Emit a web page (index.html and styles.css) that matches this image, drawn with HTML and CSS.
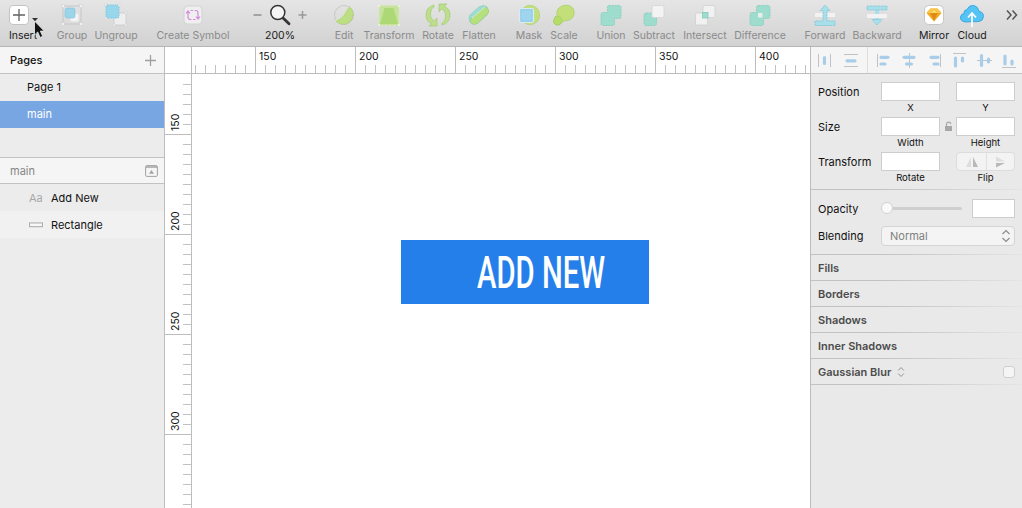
FILE: index.html
```html
<!DOCTYPE html>
<html lang="en">
<head>
<meta charset="utf-8">
<title>Sketch</title>
<link rel="stylesheet" href="styles.css">
</head>
<body>
<div class="app">
  <header class="toolbar">
    <div class="tool on insert"><svg class="icon" viewBox="0 0 24 24"><rect x="2.5" y="2.5" width="19" height="19" rx="3.5" fill="#fff" stroke="#c4c4c4"/><path d="M12 6v12M6 12h12" stroke="#606060" stroke-width="1.3"/></svg><span>Insert</span>
      <svg class="cursor" viewBox="0 0 14 24"><path d="M0 1h6l-3 3.300z" fill="#333"/><path d="M2.500 4v14l3.200-3 2.400 5.500 2.600-1.200-2.400-5.200h4z" fill="#111" stroke="#eee" stroke-width=".8"/></svg></div>
    <div class="tool group"><svg class="icon" viewBox="0 0 24 24"><rect x="3" y="3" width="18" height="18" fill="none" stroke="#c6c6c6"/><rect x="10" y="10" width="9" height="9" rx="2" fill="#f3f3f3" stroke="#ddd"/><rect x="5" y="5" width="10" height="10" rx="2" fill="#9bd5ea" stroke="#80c3e0" stroke-width=".6"/><g fill="#f2f2f2" stroke="#ccc" stroke-width=".5"><rect x="1.500" y="1.500" width="3" height="3"/><rect x="19.500" y="1.500" width="3" height="3"/><rect x="1.500" y="19.500" width="3" height="3"/><rect x="19.500" y="19.500" width="3" height="3"/></g></svg><span>Group</span></div>
    <div class="tool ungroup"><svg class="icon" viewBox="0 0 24 24"><rect x="10" y="10" width="12" height="12" rx="1" fill="#eee" stroke="#cacaca" stroke-width=".8"/><rect x="2" y="2" width="13" height="13" rx="1.500" fill="#98d6eb" stroke="#7fc5e0" stroke-dasharray="1.500 1"/><g fill="#f5f5f5" stroke="#c8c8c8" stroke-width=".4"><path d="M9 21h2v2H9zM21 21h2v2h-2zM21 9h2v2h-2zM0.500 1h2v2h-2zM14 1h2v2h-2zM0.500 14h2v2h-2z"/></g></svg><span>Ungroup</span></div>
    <div class="tool symbol"><svg class="icon" viewBox="0 0 24 24"><rect x="3" y="3" width="18" height="18" rx="3.500" fill="#efefef" stroke="#d3d3d3"/><path d="M10.500 16.500H9q-2 0-2-3V9M5 10.500l2-2.500 2 2.500M13.500 7.500H15q2 0 2 3V15M15 13.500l2 2.500 2-2.500M9.500 7.500h2.500M12 16.500h2.500" fill="none" stroke="#d58bdd" stroke-width="1.200"/></svg><span>Create Symbol</span></div>
    <div class="tool on zoom"><div class="zoomrow"><svg width="9" height="24" viewBox="0 0 9 24"><path d="M.5 12h8" stroke="#999" stroke-width="1.700"/></svg><svg class="icon" viewBox="0 0 24 24"><path d="M15 15l6 5.800" stroke="#353535" stroke-width="2.800" stroke-linecap="round"/><circle cx="9.800" cy="9.500" r="7" fill="#f5f5f5" stroke="#353535" stroke-width="1.500"/></svg><svg width="9" height="24" viewBox="0 0 9 24"><path d="M.5 12h8M4.500 8v8" stroke="#999" stroke-width="1.500"/></svg></div><span>200%</span></div>
    <div class="tool edit"><svg class="icon" viewBox="0 0 24 24"><circle cx="12" cy="12" r="9.500" fill="none" stroke="#c0c0c0" stroke-width=".8"/><path d="M17 3.500A9.800 9.800 0 1 1 4 18Q12 16 17 3.500z" fill="#bbdf82" stroke="#9fca6b" stroke-width=".8" stroke-dasharray="1.500 .8"/><path d="M4 18L17 4" stroke="#d8e8b6"/></svg><span>Edit</span></div>
    <div class="tool transform"><svg class="icon" viewBox="0 0 24 24"><rect x="2" y="2.500" width="20" height="20" fill="#c7e29c" stroke="#d9e9bd" stroke-dasharray="2 2"/><path d="M7.500 5h9l4.500 16H3z" fill="#acd876"/><path d="M1 2h2v2H1zM21 2h2v2h-2zM1 21h2v2H1zM21 21h2v2h-2z" fill="#e9f1d8"/></svg><span>Transform</span></div>
    <div class="tool rotate"><svg class="icon" viewBox="-1 0 26 24"><g fill="#bcde8d" stroke="#a4cd73" stroke-width=".7"><path id="turn" d="M8 2Q0 4 0 12q0 7 6 8.500L3 23h8v-8l-2.500 3Q4 16 4.500 10 5 5 8 4z"/><path d="M16 22q8-2 8-10 0-7-6-8.500L21 1h-8v8l2.500-3Q20 8 19.500 14 19 19 16 20z"/></g></svg><span>Rotate</span></div>
    <div class="tool flatten"><svg class="icon" viewBox="0 0 24 24"><path d="M3 12L12 4q5-3 8 0 3 4 0 8l-9 8q-5 3-8-1-2-4 0-7z" fill="#9cdcd4" stroke="#89cfc3" stroke-width=".7"/><path d="M5 15L18 4q4 1 3.500 6L11 20q-5 3-7.500-1-.5-2 1.500-4z" fill="#b6e07e" stroke="#98c95f" stroke-width=".7" stroke-dasharray="1.500 .8"/><path d="M5 15L18 4" stroke="#d9efcc"/></svg><span>Flatten</span></div>
    <div class="tool mask"><svg class="icon" viewBox="0 0 24 24"><circle cx="13" cy="12" r="9.700" fill="#c1df7d" stroke="#a9cc6d" stroke-width=".6"/><rect x="2.500" y="5.500" width="14" height="14" rx="1.500" fill="#9fd5ee" stroke="#dbeaf0" stroke-width="1.200"/><rect x="4" y="7" width="11" height="11" fill="none" stroke="#7fbfe1" stroke-width=".6" stroke-dasharray="1.500 1"/></svg><span>Mask</span></div>
    <div class="tool scale"><svg class="icon" viewBox="0 0 24 24"><path d="M6 6Q10 1 17 2.500q6 2 5 9-2 6-8 6-3 0-4 2-2 3-6 2.500-3-2-2-5 1-3 3-4-1-4 1-7z" fill="#c2df79" stroke="#a5cf62" stroke-width=".7"/><path d="M3 14q5-2 7 3 0 4-4 5-4 0-4.500-4z" fill="#b6dc69" stroke="#96c755" stroke-width=".8" stroke-dasharray="1.500 .8"/></svg><span>Scale</span></div>
    <div class="tool union"><svg class="icon" viewBox="0 0 24 24"><path d="M10 2.500h10q2 0 2 2v9q0 2-2 2h-4.500v5q0 2-2 2H4q-2 0-2-2v-9q0-2 2-2h4.500v-5q0-2 1.500-2z" fill="#9eddce" stroke="#82cbbb" stroke-width=".8" stroke-dasharray="2 .8"/></svg><span>Union</span></div>
    <div class="tool subtract"><svg class="icon" viewBox="0 0 24 24"><rect x="2" y="10" width="12.500" height="12.500" rx="2" fill="#9eddce" stroke="#82cbbb" stroke-width=".8" stroke-dasharray="2 .8"/><rect x="10" y="2.500" width="12" height="12" rx="1.500" fill="#f3f3f3" stroke="#d4d4d4" stroke-width=".8"/></svg><span>Subtract</span></div>
    <div class="tool intersect"><svg class="icon" viewBox="0 0 24 24"><g fill="#f1f1f1" stroke="#cfcfcf" stroke-width=".8"><rect x="10" y="2.500" width="12" height="12" rx="1"/><rect x="2.500" y="10" width="12" height="12" rx="1"/></g><rect x="9.500" y="9.500" width="5.500" height="5.500" fill="#9eddce" stroke="#82cbbb" stroke-width=".8"/></svg><span>Intersect</span></div>
    <div class="tool difference"><svg class="icon" viewBox="0 0 24 24"><path d="M10 2.500h10q2 0 2 2v9q0 2-2 2h-4.500v5q0 2-2 2H4q-2 0-2-2v-9q0-2 2-2h4.500v-5q0-2 1.500-2z" fill="#9eddce" stroke="#82cbbb" stroke-width=".8" stroke-dasharray="2 .8"/><rect x="10" y="10" width="4.500" height="4.500" fill="#e8eeeb"/></svg><span>Difference</span></div>
    <div class="tool forward"><svg class="icon" viewBox="0 0 24 24"><path d="M2 10h20v4H2z" fill="#f2f2f2"/><path d="M12 2l5 5.500h-3V18h8v4.500H2V18h8V7.500H7z" fill="#a8dfe8" stroke="#7cc5dc" stroke-width=".8" stroke-dasharray="2 .8"/></svg><span>Forward</span></div>
    <div class="tool backward"><svg class="icon" viewBox="0 0 24 24"><path d="M10 7h4v11h-4z" fill="#a8dfe8"/><path d="M2 3h20v4H2zM12 22l-5-5.500h10z" fill="#a8dfe8" stroke="#7cc5dc" stroke-width=".8" stroke-dasharray="2 .8"/><path d="M2 11h20v4H2z" fill="#f2f2f2"/></svg><span>Backward</span></div>
    <div class="tool on mirror"><svg class="icon" viewBox="0 0 24 24"><rect x="2.500" y="2.500" width="19" height="19" rx="4" fill="#fff" stroke="#c7c7c7"/><path d="M8.500 5.500h7L19.500 10 12 18.500 4.500 10z" fill="#f2a81d"/><path d="M8.500 5.500h7L19.500 10h-15z" fill="#f8c749"/><path d="M8.500 10L12 6l3.500 4L12 18z" fill="#dc8b18"/><path d="M8.500 10L12 6l3.500 4z" fill="#fbd967"/></svg><span>Mirror</span></div>
    <div class="tool on cloud"><svg class="icon" viewBox="0 0 24 24"><path d="M5 19q-5-1-4.500-5Q1 11 4 10.500q-.5-3.500 3-4Q9 2 13 2.500q5 .5 6 6 4.500.5 4.500 5-.5 4.500-4.500 5z" fill="#55c3f4" stroke="#269ede" stroke-width=".8"/><path d="M12 24V11M8 14.500l4-4.500 4 4.500" fill="none" stroke="#f8fcff" stroke-width="1.800"/></svg><span>Cloud</span></div>
    <svg class="more" width="12" height="24" viewBox="0 0 12 24"><path d="M1 7.500l4 4.500-4 4.500M6.500 7.500l4 4.500-4 4.500" fill="none" stroke="#555" stroke-width="1.500"/></svg>
  </header>

  <div class="workspace">
    <aside class="sidebar">
      <div class="side-head pages"><span>Pages</span><svg width="13" height="13" viewBox="0 0 13 13"><path d="M6.500 1v11M1 6.500h11" stroke="#a0a0a0" stroke-width="1.300"/></svg></div>
      <div class="page">Page 1</div>
      <div class="page selected">main</div>
      <div class="side-head layers"><span>main</span><svg width="13" height="12" viewBox="0 0 13 12"><rect x=".6" y=".6" width="11.800" height="10.800" rx="1.200" fill="none" stroke="#a3a3a3"/><path d="M1 2h11" stroke="#a3a3a3" stroke-width="1.500"/><path d="M6.500 5L9 8.800H4z" fill="#a3a3a3"/></svg></div>
      <div class="layer"><span class="aa">Aa</span><span>Add New</span></div>
      <div class="layer alt"><svg width="15" height="6" viewBox="0 0 15 6"><rect x=".6" y=".8" width="13.800" height="4" fill="#f8f8f8" stroke="#aaa" stroke-width="1.100"/></svg><span>Rectangle</span></div>
    </aside>

    <main class="stage">
      <div class="corner"></div>
      <div class="ruler-x"><span>150</span><span>200</span><span>250</span><span>300</span><span>350</span><span>400</span></div>
      <div class="ruler-y"><span>150</span><span>200</span><span>250</span><span>300</span></div>
      <div class="canvas">
        <svg class="artwork" width="248" height="64" viewBox="0 0 248 64"><rect width="248" height="64" fill="#257fea"/><text x="76" y="48" textLength="128" lengthAdjust="spacingAndGlyphs">ADD NEW</text></svg>
      </div>
    </main>

    <aside class="inspector">
      <div class="align">
        <svg width="211" height="26" viewBox="811 47 211 26">
          <g stroke="#bfc3c7" stroke-width="1" fill="none"><path d="M818.500 54v13M830.500 54v13M844 54.500h14M844 66.500h14M877.500 54v13M909.500 53v15M940.500 54v13M953 53.500h13M977 60.500h15M1002 67.500h14"/><path d="M867.500 47v26" stroke="#dedede"/></g>
          <g stroke="#a9cde9" stroke-width="3.200" stroke-linecap="round"><path d="M824.500 57.500v6M847 60.800h8M881 57.300h7M881 64h4M904 57.300h10M906.500 64h5M931 57.300h7M934 64h4M955.500 58v8M962.500 58v3M981.500 55.500v10M988.500 59v3M1005 56v8M1012 61v3"/></g>
        </svg>
      </div>
      <section class="geometry">
        <label>Position</label><i class="field"></i><b></b><i class="field"></i>
        <em class="c2">X</em><em class="c4">Y</em>
        <label>Size</label><i class="field"></i><b><svg width="9" height="11" viewBox="0 0 9 11"><path d="M1 5h7v5H1z" fill="#a7a7a7"/><path d="M2.500 5V3Q3 1 5 1.200q1.800.2 1.800 2" fill="none" stroke="#a7a7a7" stroke-width="1.200"/></svg></b><i class="field"></i>
        <em class="c2">Width</em><em class="c4">Height</em>
        <label>Transform</label><i class="field"></i><b></b>
        <div class="flip"><svg width="58" height="18" viewBox="0 0 58 18"><path d="M29.500 0v18" stroke="#e0e0e0"/><path d="M14 4v10H9z" fill="#ddd"/><path d="M16 4v10h5z" fill="#b9b9b9"/><path d="M39 3.500v5h9z" fill="#ddd"/><path d="M39 14.500v-4.500h9z" fill="#b9b9b9"/></svg></div>
        <em class="c2">Rotate</em><em class="c4">Flip</em>
      </section>
      <section class="blend">
        <div class="row"><label>Opacity</label><div class="slider"><div class="track"></div><div class="knob"></div></div><i class="field small"></i></div>
        <div class="row"><label>Blending</label><div class="select"><span>Normal</span><svg width="10" height="14" viewBox="0 0 10 14"><path d="M1.500 5L5 1.500 8.500 5M1.500 9L5 12.500 8.500 9" fill="none" stroke="#8d8d8d" stroke-width="1.200"/></svg></div></div>
      </section>
      <div class="prop">Fills</div>
      <div class="prop">Borders</div>
      <div class="prop">Shadows</div>
      <div class="prop">Inner Shadows</div>
      <div class="prop">Gaussian Blur<svg width="8" height="12" viewBox="0 0 8 12"><path d="M1.200 4.500L4 1.500l2.800 3M1.200 7.500L4 10.500l2.800-3" fill="none" stroke="#949494" stroke-width="1"/></svg><span class="check"></span></div>
      <div class="end"></div>
    </aside>
  </div>
</div>
</body>
</html>
```
FILE: styles.css
```css
* { box-sizing: border-box; }
body { margin: 0; font: 11px/14px Inter, "Liberation Sans", sans-serif; color: #111; }
svg { display: block; flex: none; }
i, em { font-style: normal; }
.app { width: 1022px; height: 508px; display: flex; flex-direction: column; overflow: hidden; background: #fff; }

.toolbar { height: 47px; flex: none; display: flex; align-items: flex-start; padding-top: 3px; background: linear-gradient(#e5e5e5, #d2d2d2); border-bottom: 1px solid #b5b5b5; }
.tool { flex: none; display: flex; flex-direction: column; align-items: center; color: #8b8b8b; white-space: nowrap; margin-left: 8px; position: relative; font-size: 10.5px; }
.tool > span { margin-top: 1px; line-height: 15px; }
.tool.on { color: #202020; }
.icon { width: 24px; height: 24px; }
.cursor { position: absolute; left: 23px; top: 14px; width: 14px; height: 24px; }
.insert { width: 28px; margin-left: 9px; }
.insert .icon { position: relative; left: -4px; }
.group { width: 30px; margin-left: 20px; }
.ungroup { width: 42px; }
.symbol { width: 72px; margin-left: 20px; }
.zoom { width: 56px; margin-left: 23px; }
.zoomrow { display: flex; justify-content: space-between; width: 54px; }
.edit { width: 20px; margin-left: 26px; }
.transform { width: 50px; margin-left: 10px; }
.rotate { width: 32px; }
.rotate .icon { width: 26px; }
.flatten { width: 34px; }
.mask { width: 26px; margin-left: 20px; }
.scale { width: 26px; margin-left: 9px; }
.union { width: 28px; margin-left: 20px; }
.subtract { width: 42px; }
.intersect { width: 42px; margin-left: 9px; }
.difference { width: 50px; margin-left: 9px; }
.forward { width: 40px; margin-left: 20px; }
.backward { width: 48px; }
.mirror { width: 30px; margin-left: 18px; }
.cloud { width: 30px; }
.more { margin-left: 19px; }

.workspace { flex: 1; min-height: 0; display: grid; grid-template-columns: 164px 646px 212px; }
.sidebar { background: #ececec; }
.side-head { height: 27px; display: flex; align-items: center; justify-content: space-between; padding: 0 7px 0 10px; background: #f5f5f5; border-bottom: 1px solid #c2c2c2; }
.pages { font-weight: 500; }
.page { height: 27px; line-height: 27px; padding-left: 27px; }
.page.selected { background: #78a6e2; color: #fff; }
.layers { margin-top: 29px; border-top: 1px solid #c2c2c2; color: #858585; padding-right: 6px; }
.layer { height: 27px; display: flex; align-items: center; padding-left: 29px; gap: 8px; }
.layer.alt { background: #f1f1f1; }
.layer .aa { width: 14px; color: #a8a8a8; }
.layer svg { width: 14px; }

.stage { display: grid; grid-template: 27px 1fr / 28px 1fr; border-left: 1px solid #bdbdbd; background: #fff; }
.corner, .ruler-y { border-right: 1px solid #bdbdbd; }
.corner, .ruler-x { border-bottom: 1px solid #bdbdbd; }
.stage { grid-template-columns: 27px 1fr; }
.ruler-x { display: flex; padding-left: 63px; overflow: hidden;
  background: repeating-linear-gradient(90deg, #bdbdbd 0 1px, transparent 1px 100px) 63px 0 / 600px 26px no-repeat, repeating-linear-gradient(90deg, #c2c2c2 0 1px, transparent 1px 10px) 3px 18px / 620px 8px no-repeat; }
.ruler-x span { width: 100px; flex: none; padding: 3px 0 0 4px; font-size: 10.5px; line-height: 13px; }
.ruler-y { display: flex; flex-direction: column; padding-top: 0; overflow: hidden;
  background: repeating-linear-gradient(#bdbdbd 0 1px, transparent 1px 100px) 0 60px / 26px 400px no-repeat, repeating-linear-gradient(#c2c2c2 0 1px, transparent 1px 10px) 18px 10px / 8px 430px no-repeat; }
.ruler-y span { height: 100px; flex: none; writing-mode: vertical-rl; transform: rotate(180deg); padding: 3px 4px 0 0; font-size: 10.5px; line-height: 13px; width: 26px; }
.ruler-y span:first-child { height: 60px; }
.canvas { padding: 166px 0 0 209px; }
.artwork text { font: 500 45px Roboto, "Liberation Sans", sans-serif; fill: #fff; }

.inspector { background: #e9e9e9; border-left: 1px solid #bdbdbd; display: flex; flex-direction: column; }
.align { height: 27px; flex: none; background: #f5f5f5; border-bottom: 1px solid #c2c2c2; }
.geometry { height: 115px; flex: none; padding: 8px 0 0 7px; display: grid; grid-template-columns: 63px 59px 16px 59px; grid-template-rows: 19px 16px 19px 16px 19px 16px; }
.geometry label { line-height: 20px; }
.field { background: #fff; border: 1px solid #cdcdcd; }
.geometry b { display: flex; align-items: center; justify-content: center; }
.geometry em { text-align: center; font-size: 9.500px; line-height: 14px; padding-top: 0; }
.geometry .c2 { grid-column: 2; }
.geometry .c4 { grid-column: 4; }
.flip { background: #f3f3f3; border: 1px solid #dcdcdc; border-radius: 4px; overflow: hidden; }
.blend { height: 65px; flex: none; padding: 5px 7px 0; border-top: 1px solid; border-image: linear-gradient(90deg, #c2c2c2 35%, #e5e5e5) 1; }
.row { display: flex; align-items: center; height: 27px; }
.row label { width: 63px; }
.slider { width: 81px; height: 13px; position: relative; padding-top: 5px; }
.track { height: 3px; border-radius: 2px; background: #cfcfcf; }
.knob { position: absolute; left: 0; top: 0; width: 12px; height: 12px; border-radius: 50%; background: #fafafa; border: 1px solid #d2d2d2; }
.small { width: 43px; height: 19px; margin-left: 10px; }
.select { width: 134px; height: 20px; display: flex; align-items: center; justify-content: space-between; padding: 0 3px 0 8px; border: 1px solid #d4d4d4; border-radius: 4px; background: #f4f4f4; color: #808080; }
.prop { height: 26px; flex: none; display: flex; align-items: center; padding: 0 7px; border-top: 1px solid; border-image: linear-gradient(90deg, #c2c2c2 35%, #e5e5e5) 1; font-weight: 600; color: #4c4c4c; }
.prop svg { margin-left: 6px; }
.check { margin-left: auto; width: 12px; height: 12px; border: 1px solid #cfcfcf; border-radius: 3px; background: #f5f5f5; }
.end { height: 1px; background: linear-gradient(90deg, #c2c2c2 35%, #e5e5e5); }
```
